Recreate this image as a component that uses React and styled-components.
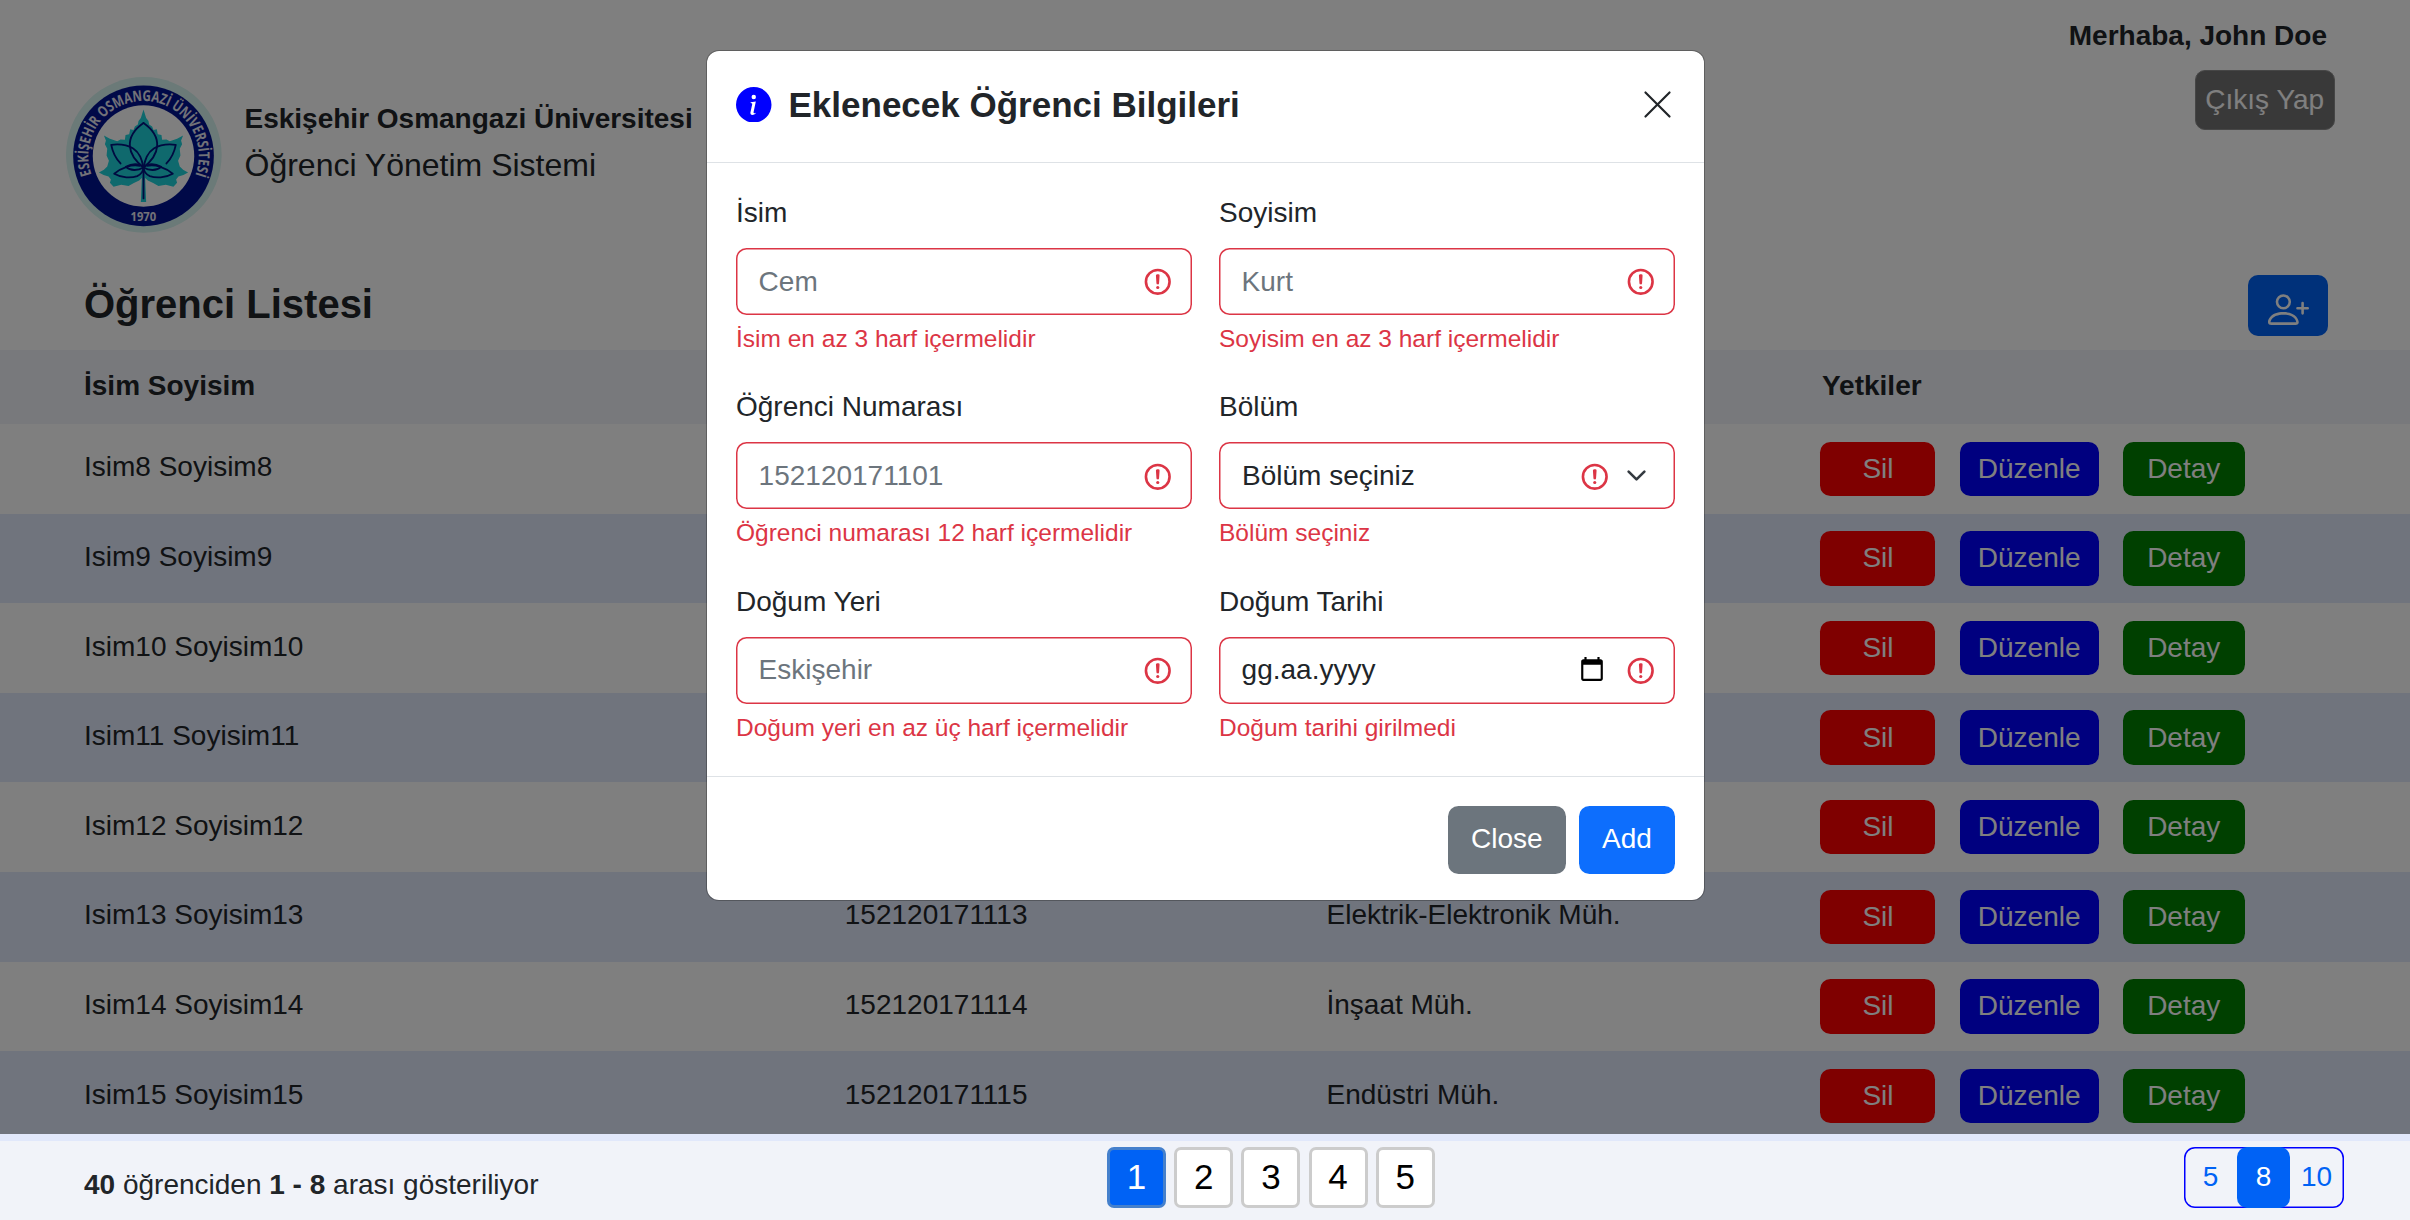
import React from "react";
import styled, { createGlobalStyle } from "styled-components";
import { BsInfoCircleFill, BsPersonPlus, BsXLg } from "react-icons/bs";

const GlobalStyle = createGlobalStyle`
  *, *::before, *::after { box-sizing: border-box; }
  body {
    margin: 0;
    background: #fff;
    color: #212529;
    font-family: "Liberation Sans", Arial, sans-serif;
    font-size: 28px;
    line-height: 42px;
  }
  button, input { font: inherit; }
`;

const Page = styled.div`
  position: relative;
  display: flex;
  flex-direction: column;
  width: 2410px;
  height: 1220px;
  overflow: hidden;
`;

const Header = styled.header`
  display: flex;
  justify-content: space-between;
  height: 274px;
  padding: 0 75.5px 0 66px;
`;

const Brand = styled.div`
  display: flex;
  gap: 22.5px;
  padding-top: 77px;
`;

const BrandText = styled.div`
  padding-top: 21px;
`;

const University = styled.div`
  font-weight: 700;
`;

const SystemName = styled.div`
  margin-top: 0.5px;
  font-size: 32px;
  line-height: 48px;
`;

const UserArea = styled.div`
  display: flex;
  flex-direction: column;
  align-items: flex-end;
  gap: 13px;
  padding-top: 15px;
`;

const Greeting = styled.div`
  margin-right: 7.5px;
  font-weight: 700;
`;

const LogoutButton = styled.button`
  width: 139.5px;
  height: 60px;
  padding: 0;
  border: 1px solid #8c8c8c;
  border-radius: 10px;
  background: #737373;
  color: #fff;
`;

const ListBar = styled.div`
  display: flex;
  justify-content: space-between;
  height: 75.7px;
  padding: 0 82px 0 84px;
`;

const ListTitle = styled.h1`
  margin: 0;
  font-size: 40px;
  line-height: 60px;
`;

const AddStudentButton = styled.button`
  display: flex;
  justify-content: center;
  width: 80px;
  height: 61px;
  margin-top: 1px;
  padding: 14px 0 0;
  border: 0;
  border-radius: 10px;
  background: #0062f5;
  color: #fff;
`;

const Row = styled.div`
  display: grid;
  flex: none;
  grid-template-columns: 760.8px 481.7px 494px 1fr;
  height: ${(p) => (p.$head ? "74.3px" : "89.6px")};
  padding-left: 84px;
  padding-top: ${(p) => (p.$head ? "15.6px" : "0")};
  background: ${(p) => (p.$head ? "#f1f3f8" : p.$striped ? "#e1e8fb" : "#fff")};
  font-weight: ${(p) => (p.$head ? 700 : 400)};
`;

const Cell = styled.div`
  padding-top: ${(p) => (p.$head ? "0" : "22.4px")};
  padding-left: ${(p) => p.$indent || 0}px;
`;

const Actions = styled.div`
  display: flex;
  gap: 24.2px;
  padding-top: 17.6px;
`;

const ActionButton = styled.button`
  width: ${(p) => p.$width}px;
  height: 54.5px;
  padding: 0;
  border: 0;
  border-radius: 10.5px;
  background: ${(p) => p.$color};
  color: #fff;
`;

const Footer = styled.footer`
  display: flex;
  flex: 1;
  align-items: flex-start;
  padding: 6.5px 66px 0 84px;
  background: #f1f3f9;
`;

const Summary = styled.div`
  width: 1023px;
  padding-top: 17px;
`;

const Pager = styled.nav`
  display: flex;
  gap: 8.2px;
`;

const PageButton = styled.button`
  width: 59px;
  height: 61px;
  padding: 0 0 2px;
  border: 3px solid ${(p) => (p.$active ? "#4580cc" : "#ccc")};
  border-radius: 7px;
  background: ${(p) => (p.$active ? "#0062f5" : "#fff")};
  color: ${(p) => (p.$active ? "#fff" : "#000")};
  font-size: 35px;
  line-height: 52px;
`;

const SizeGroup = styled.div`
  display: flex;
  width: 160px;
  height: 61px;
  margin-left: auto;
  border-radius: 11px;
  box-shadow: inset 0 0 0 1.5px #0000ff;
`;

const SizeOption = styled.button`
  width: 53px;
  padding: 0 0 2px;
  border: 0;
  border-radius: 10px;
  background: ${(p) => (p.$active ? "#0062f5" : "transparent")};
  color: ${(p) => (p.$active ? "#fff" : "#0062f5")};
`;

const Backdrop = styled.div`
  position: absolute;
  top: 0;
  left: 0;
  display: flex;
  justify-content: center;
  align-items: flex-start;
  width: 100%;
  height: 1134.3px;
  padding: 50px 0 0 1px;
  background: rgba(0, 0, 0, 0.5);
`;

const Modal = styled.div`
  display: flex;
  flex-direction: column;
  width: 999px;
  height: 851px;
  border: 1px solid rgba(0, 0, 0, 0.25);
  border-radius: 13px;
  background: #fff;
  background-clip: padding-box;
`;

const ModalHeader = styled.div`
  display: flex;
  align-items: center;
  height: 112px;
  padding: 0 29.5px 4px 29px;
  border-bottom: 1px solid #dee2e6;
`;

const ModalTitle = styled.h2`
  flex: 1;
  margin: 0 0 0 17px;
  font-size: 35px;
  line-height: 52px;
`;

const InfoIcon = styled(BsInfoCircleFill)`
  color: #0000ff;
`;

const Form = styled.div`
  display: grid;
  grid-template-columns: 456px 456px;
  grid-auto-rows: 165.75px;
  column-gap: 27px;
  row-gap: 28.5px;
  height: 613px;
  padding: 29px 29px 0;
`;

const Field = styled.label`
  display: block;
`;

const FieldLabel = styled.div`
  margin-bottom: 14px;
`;

const Control = styled.div`
  display: flex;
  align-items: center;
  height: 67px;
  padding: 0 ${(p) => (p.$select ? "28px" : "18.2px")} 0 ${(p) => (p.$select ? 23 : 22.6)}px;
  border-radius: 10.5px;
  box-shadow: inset 0 0 0 1.5px #dc3545;
`;

const TextInput = styled.input`
  flex: 1;
  min-width: 0;
  padding: 0;
  border: 0;
  outline: 0;
  background: transparent;
  line-height: 42px;
  &::placeholder { color: #6c757d; opacity: 1; }
`;

const ControlText = styled.div`
  flex: 1;
`;

const ErrorText = styled.div`
  margin-top: 6px;
  color: #dc3545;
  font-size: 24.5px;
  line-height: 36.75px;
`;

const InvalidSvg = styled.svg`
  flex: none;
  margin-top: 1px;
`;

const ChevronSvg = styled.svg`
  flex: none;
  margin-left: 15.5px;
`;

const CalendarSvg = styled.svg`
  flex: none;
  margin: 0 20px 2px 0;
`;

const ModalFooter = styled.div`
  display: flex;
  flex: 1;
  justify-content: flex-end;
  align-items: flex-start;
  gap: 13px;
  padding: 29px 29px 0;
  border-top: 1px solid #dee2e6;
`;

const ModalButton = styled.button`
  width: ${(p) => p.$width}px;
  height: 67.5px;
  padding: 0 0 2px;
  border: 0;
  border-radius: 10.5px;
  background: ${(p) => p.$color};
  color: #fff;
`;

const LEAF_HALF = [
  [243, 143], [236, 152], [234, 163], [225, 169], [221, 179], [211, 177], [208, 192],
  [197, 194], [195, 209], [182, 208], [172, 213], [150, 206], [132, 196], [138, 211],
  [135, 222], [142, 236], [140, 256], [147, 272], [142, 289], [132, 299], [117, 307],
  [131, 315], [146, 319], [153, 328], [150, 338], [161, 350], [184, 344], [206, 348],
  [222, 339], [238, 331], [246, 324], [243, 396],
];
const LEAF_POINTS = [
  [251, 118],
  ...LEAF_HALF,
  ...[...LEAF_HALF].reverse().map(([x, y]) => [502 - x, y]),
].map((p) => p.join(",")).join(" ");

const Petals = () => (
  <g>
    <path d="M182 280C165 262 158 245 154 224C185 220 205 226 220 235C240 248 246 268 251 292" />
    <path d="M251 158C222 178 208 200 210 228C212 256 228 274 251 292" />
    <path d="M240 287C215 282 185 292 163 311C185 324 215 324 232 318C246 312 250 302 251 292" />
    <path d="M251 292C238 278 215 280 198 290C212 303 234 302 251 292" />
  </g>
);

const Logo = () => (
  <svg width="156" height="156" viewBox="18 20 469 469">
    <defs>
      <path id="ringText" d="M94.7 313.9A166 166 0 1 1 407.3 313.9" />
    </defs>
    <circle cx="252" cy="254" r="234" fill="#d6f4f0" />
    <circle cx="251" cy="257" r="211.5" fill="#001290" />
    <circle cx="251" cy="257.5" r="152.5" fill="#fff" />
    <text fill="#e4e4f0" fontFamily="'Open Sans', 'Noto Sans', sans-serif" fontWeight="700" fontSize="45">
      <textPath href="#ringText" textLength="636" lengthAdjust="spacingAndGlyphs">
        ESKİŞEHİR OSMANGAZİ ÜNİVERSİTESİ
      </textPath>
    </text>
    <text
      x="212"
      y="452"
      fill="#e4e4f0"
      fontFamily="'Open Sans', 'Noto Sans', sans-serif"
      fontWeight="700"
      fontSize="37"
      textLength="77"
      lengthAdjust="spacingAndGlyphs"
    >
      1970
    </text>
    <polygon points={LEAF_POINTS} fill="#1ed2da" />
    <g fill="none" stroke="#001480" strokeWidth="5.5" strokeLinejoin="round" strokeLinecap="round">
      <Petals />
      <g transform="translate(502 0) scale(-1 1)">
        <Petals />
      </g>
      <path d="M251 288V385" />
    </g>
  </svg>
);

const InvalidIcon = () => (
  <InvalidSvg width="31.5" height="31.5" viewBox="0 0 12 12" fill="none" stroke="#dc3545">
    <circle cx="6" cy="6" r="4.5" />
    <path strokeLinejoin="round" d="M5.8 3.6h.4L6 6.5z" />
    <circle cx="6" cy="8.2" r=".6" fill="#dc3545" stroke="none" />
  </InvalidSvg>
);

const ChevronIcon = () => (
  <ChevronSvg width="21" height="21" viewBox="0 0 16 16" fill="none" stroke="#343a40">
    <path strokeLinecap="round" strokeLinejoin="round" strokeWidth="2" d="m2 5 6 6 6-6" />
  </ChevronSvg>
);

const CalendarIcon = () => (
  <CalendarSvg width="26" height="26" viewBox="0 0 24 24" fill="#000">
    <path d="M20 3h-1V1h-2v2H7V1H5v2H4c-1.1 0-2 .9-2 2v16c0 1.1.9 2 2 2h16c1.1 0 2-.9 2-2V5c0-1.1-.9-2-2-2zm0 18H4V8h16v13z" />
  </CalendarSvg>
);

const STUDENTS = [
  [8, "Bilgisayar Müh."],
  [9, "Makine Müh."],
  [10, "Endüstri Müh."],
  [11, "İnşaat Müh."],
  [12, "Bilgisayar Müh."],
  [13, "Elektrik-Elektronik Müh."],
  [14, "İnşaat Müh."],
  [15, "Endüstri Müh."],
];

const FIELDS = [
  { label: "İsim", placeholder: "Cem", error: "İsim en az 3 harf içermelidir" },
  { label: "Soyisim", placeholder: "Kurt", error: "Soyisim en az 3 harf içermelidir" },
  { label: "Öğrenci Numarası", placeholder: "152120171101", error: "Öğrenci numarası 12 harf içermelidir" },
  { label: "Bölüm", select: "Bölüm seçiniz", error: "Bölüm seçiniz" },
  { label: "Doğum Yeri", placeholder: "Eskişehir", error: "Doğum yeri en az üç harf içermelidir" },
  { label: "Doğum Tarihi", date: "gg.aa.yyyy", error: "Doğum tarihi girilmedi" },
];

function FormField({ label, placeholder, select, date, error }) {
  return (
    <Field>
      <FieldLabel>{label}</FieldLabel>
      <Control $select={Boolean(select)}>
        {placeholder ? <TextInput placeholder={placeholder} /> : <ControlText>{select || date}</ControlText>}
        {date && <CalendarIcon />}
        <InvalidIcon />
        {select && <ChevronIcon />}
      </Control>
      <ErrorText>{error}</ErrorText>
    </Field>
  );
}

export default function App() {
  return (
    <Page>
      <GlobalStyle />
      <Header>
        <Brand>
          <Logo />
          <BrandText>
            <University>Eskişehir Osmangazi Üniversitesi</University>
            <SystemName>Öğrenci Yönetim Sistemi</SystemName>
          </BrandText>
        </Brand>
        <UserArea>
          <Greeting>Merhaba, John Doe</Greeting>
          <LogoutButton>Çıkış Yap</LogoutButton>
        </UserArea>
      </Header>

      <ListBar>
        <ListTitle>Öğrenci Listesi</ListTitle>
        <AddStudentButton aria-label="Ekle">
          <BsPersonPlus size={41} />
        </AddStudentButton>
      </ListBar>

      <Row $head>
        <Cell $head>İsim Soyisim</Cell>
        <Cell $head />
        <Cell $head />
        <Cell $head $indent={1.5}>Yetkiler</Cell>
      </Row>
      {STUDENTS.map(([n, department], i) => (
        <Row key={n} $striped={i % 2 === 1}>
          <Cell>{`Isim${n} Soyisim${n}`}</Cell>
          <Cell>{n > 12 && `1521201711${n}`}</Cell>
          <Cell>{n > 12 && department}</Cell>
          <Actions>
            <ActionButton $color="#ff0000" $width={115}>Sil</ActionButton>
            <ActionButton $color="#0000ff" $width={139}>Düzenle</ActionButton>
            <ActionButton $color="#008000" $width={121.7}>Detay</ActionButton>
          </Actions>
        </Row>
      ))}

      <Footer>
        <Summary>
          <b>40</b> öğrenciden <b>1 - 8</b> arası gösteriliyor
        </Summary>
        <Pager>
          {[1, 2, 3, 4, 5].map((n) => (
            <PageButton key={n} $active={n === 1}>{n}</PageButton>
          ))}
        </Pager>
        <SizeGroup>
          {[5, 8, 10].map((n) => (
            <SizeOption key={n} $active={n === 8}>{n}</SizeOption>
          ))}
        </SizeGroup>
      </Footer>

      <Backdrop>
        <Modal role="dialog">
          <ModalHeader>
            <InfoIcon size={35.5} />
            <ModalTitle>Eklenecek Öğrenci Bilgileri</ModalTitle>
            <BsXLg size={35} />
          </ModalHeader>
          <Form>
            {FIELDS.map((field) => (
              <FormField key={field.label} {...field} />
            ))}
          </Form>
          <ModalFooter>
            <ModalButton $color="#6c757d" $width={118.5}>Close</ModalButton>
            <ModalButton $color="#0d6efd" $width={96}>Add</ModalButton>
          </ModalFooter>
        </Modal>
      </Backdrop>
    </Page>
  );
}
